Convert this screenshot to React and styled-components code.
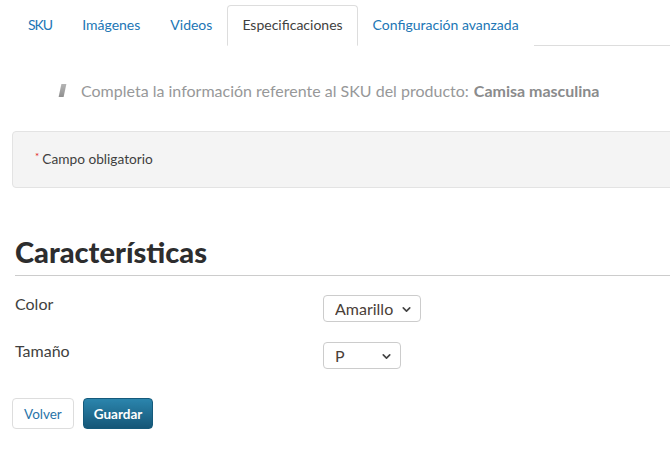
import React from "react";
import styled, { createGlobalStyle } from "styled-components";
import { ChevronDown } from "lucide-react";

const GlobalStyle = createGlobalStyle`
    html, body {
        margin: 0;
        padding: 0;
        background: #fff;
        overflow: hidden;
    }
    body {
        font-family: Lato, "Noto Sans", sans-serif;
        color: #3f3f40;
    }
`;

const Page = styled.div`
    width: 670px;
    height: 457px;
    padding: 5px 0 0 12px;
    box-sizing: border-box;
`;

const TabBar = styled.ul`
    display: flex;
    margin: 0;
    padding: 0;
    list-style: none;
    border-bottom: 1px solid #ddd;
    height: 40px;
`;

const Tab = styled.li`
    display: flex;
    align-items: center;
    padding: 0 14px 2px;
    margin-bottom: -1px;
    font-size: 14px;
    color: ${p => (p.$active ? "#3f3f40" : "#2176b5")};
    background: #fff;
    border: 1px solid ${p => (p.$active ? "#ddd" : "transparent")};
    border-bottom-color: ${p => (p.$active ? "#fff" : "transparent")};
    border-radius: 4px 4px 0 0;
    &:first-child {
        padding-left: 15px;
        letter-spacing: -1px;
    }
`;

const Lead = styled.p`
    display: flex;
    align-items: center;
    margin: 35px 0 0 48px;
    font-size: 16px;
    line-height: 19px;
    color: #979899;
    b {
        color: #8a8b8c;
        margin-left: 5px;
    }
`;

const QuoteMark = styled.span`
    display: inline-block;
    width: 5px;
    height: 13px;
    margin-right: 16px;
    background: linear-gradient(#b5b5b5, #8f8f8f);
    transform: skewX(-12deg);
`;

const Notice = styled.div`
    margin-top: 31px;
    height: 57px;
    box-sizing: border-box;
    width: 670px;
    padding: 0 22px 3px;
    display: flex;
    align-items: center;
    background: #f4f4f4;
    border: 1px solid #e3e3e3;
    border-radius: 4px;
    font-size: 13.7px;
    color: #3f3f40;
`;

const Required = styled.span`
    color: #e31b1b;
    font-size: 10px;
    margin-right: 3px;
    align-self: flex-start;
    margin-top: 18px;
`;

const Heading = styled.h2`
    margin: 48px 0 0 3px;
    padding-bottom: 7px;
    font-size: 29px;
    font-weight: 900;
    color: #2d2d2e;
    line-height: 32px;
    border-bottom: 1px solid #ccc;
`;

const Field = styled.div`
    display: grid;
    grid-template-columns: 308px auto;
    align-items: start;
    margin-left: 3px;
    margin-top: ${p => p.$top}px;
`;

const Label = styled.label`
    font-size: 16px;
    color: #3f3f40;
    line-height: 18px;
`;

const SelectWrap = styled.div`
    position: relative;
    display: inline-flex;
    width: ${p => p.$width}px;
    justify-self: start;
    svg {
        position: absolute;
        right: 8px;
        top: 8px;
        color: #444;
        pointer-events: none;
    }
`;

const Select = styled.select`
    appearance: none;
    width: 100%;
    height: 27px;
    padding: 0 0 0 11px;
    font-family: Lato, "Noto Sans", sans-serif;
    font-size: 16px;
    color: #4a4038;
    background: #fff;
    border: 1px solid #ccc;
    border-radius: 4px;
    outline: none;
`;

const Actions = styled.div`
    display: flex;
    gap: 9px;
    margin-top: 29px;
`;

const Button = styled.button`
    height: 31px;
    padding: 0 ${p => (p.$primary ? 10 : 11)}px;
    font-family: Lato, "Noto Sans", sans-serif;
    font-size: 13.5px;
    border-radius: 4px;
    cursor: pointer;
    ${p =>
        p.$primary
            ? `
        color: #fff;
        font-weight: 700;
        border: 1px solid #155a7b;
        background: linear-gradient(#2b85ad, #155677);
    `
            : `
        color: #2a74a8;
        border: 1px solid #ddd;
        background: #fff;
    `}
`;

const tabs = ["SKU", "Imágenes", "Videos", "Especificaciones", "Configuración avanzada"];

export default function App() {
    return (
        <>
            <GlobalStyle />
            <Page>
                <TabBar>
                    {tabs.map(t => (
                        <Tab key={t} $active={t === "Especificaciones"}>
                            {t}
                        </Tab>
                    ))}
                </TabBar>

                <Lead>
                    <QuoteMark />
                    Completa la información referente al SKU del producto:
                    <b>Camisa masculina</b>
                </Lead>

                <Notice>
                    <Required>*</Required>
                    Campo obligatorio
                </Notice>

                <Heading>Características</Heading>

                <Field $top={19}>
                    <Label>Color</Label>
                    <SelectWrap $width={98}>
                        <Select defaultValue="Amarillo">
                            <option>Amarillo</option>
                            <option>Azul</option>
                            <option>Blanco</option>
                        </Select>
                        <ChevronDown size={13} strokeWidth={3} />
                    </SelectWrap>
                </Field>

                <Field $top={20}>
                    <Label>Tamaño</Label>
                    <SelectWrap $width={78}>
                        <Select defaultValue="P">
                            <option>P</option>
                            <option>M</option>
                            <option>G</option>
                        </Select>
                        <ChevronDown size={13} strokeWidth={3} />
                    </SelectWrap>
                </Field>

                <Actions>
                    <Button>Volver</Button>
                    <Button $primary>Guardar</Button>
                </Actions>
            </Page>
        </>
    );
}
